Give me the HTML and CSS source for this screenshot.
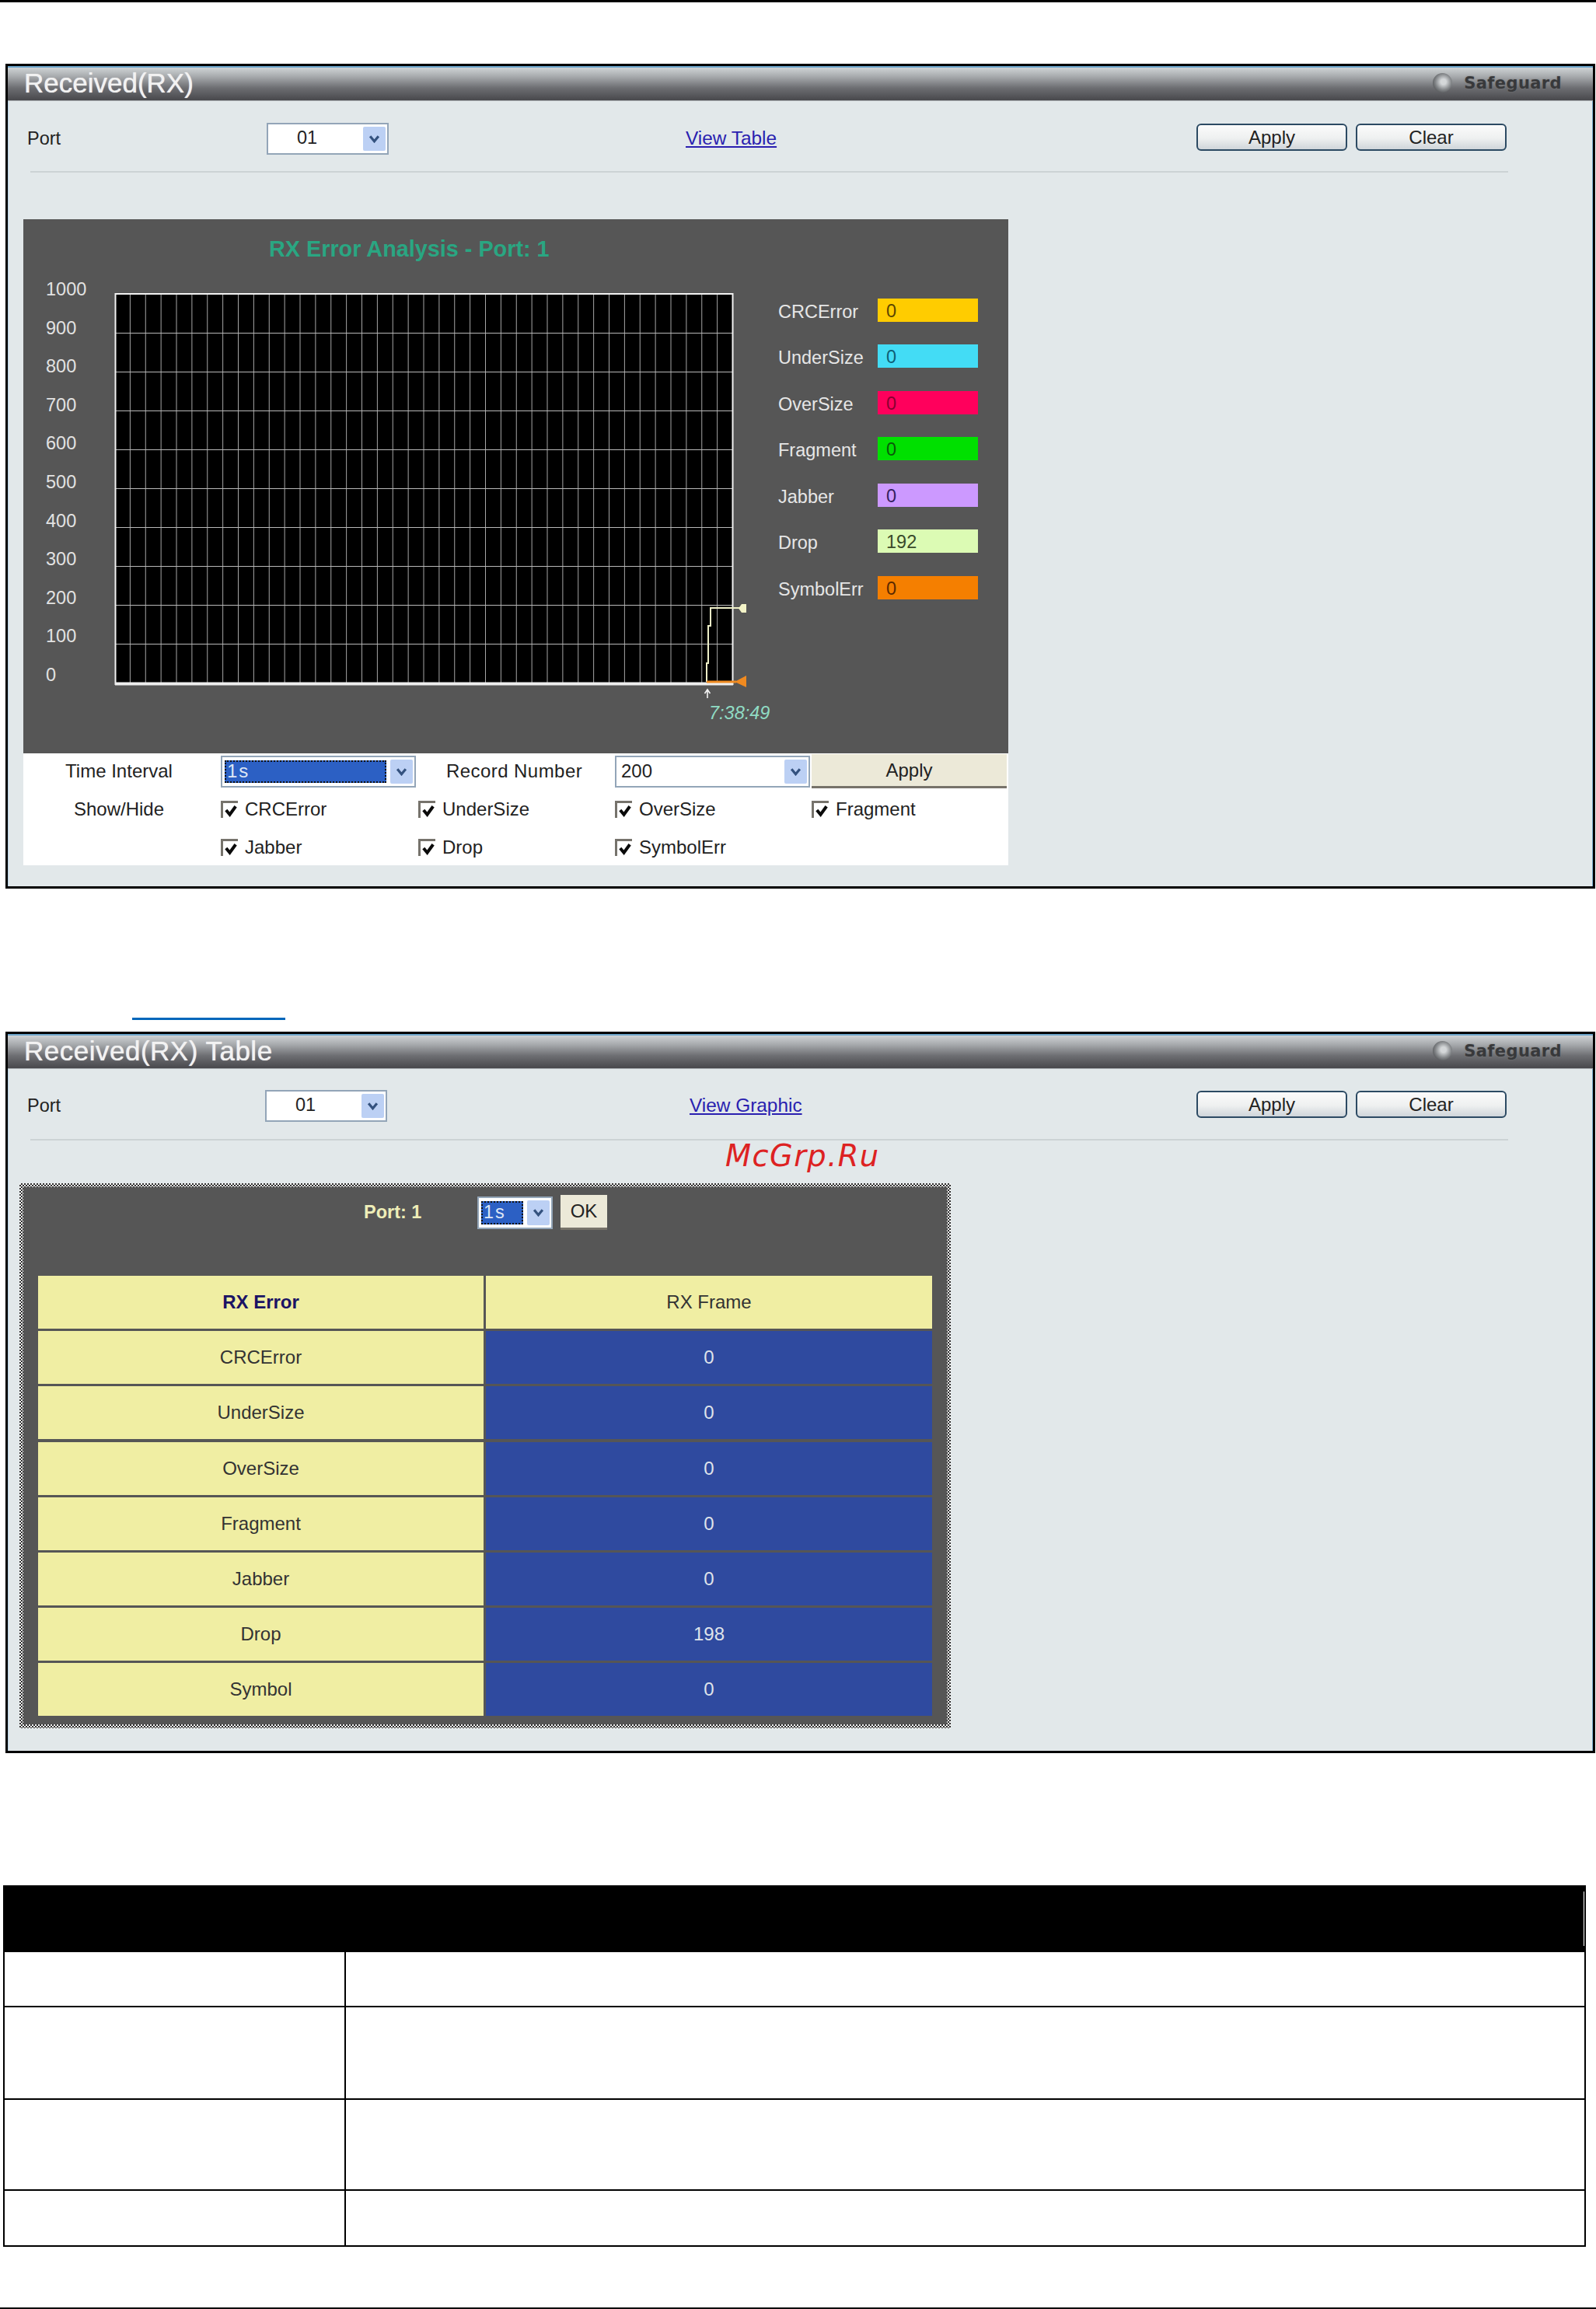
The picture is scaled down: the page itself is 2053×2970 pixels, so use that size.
FILE: index.html
```html
<!DOCTYPE html>
<html lang="en">
<head>
<meta charset="utf-8">
<title>Received(RX)</title>
<link rel="stylesheet" href="styles.css">
</head>
<body>
<div class="page">
  <div class="rule-top"></div>

  <section class="panel panel-graph">
    <header class="titlebar">
      <h2 class="title">Received(RX)</h2>
      <div class="safeguard"><span class="sg-dot"></span><span class="sg-text">Safeguard</span></div>
    </header>
    <div class="toolbar toolbar-graph">
      <span class="tb-label">Port</span>
      <div class="sel sel-port"><span class="sel-val sel-val-port">01</span><span class="sel-btn"><svg class="chev" viewBox="0 0 14 10"><path d="M2 2l5 6 5-6"/></svg></span></div>
      <a class="link" href="#">View Table</a>
      <button class="btn">Apply</button>
      <button class="btn">Clear</button>
    </div>
    <div class="divider"></div>

    <div class="analysis">
      <div class="chart">
        <div class="chart-title">RX Error Analysis - Port: 1</div>
        <div class="chart-body">
          <div class="yaxis">
            <span>1000</span><span>900</span><span>800</span><span>700</span><span>600</span><span>500</span><span>400</span><span>300</span><span>200</span><span>100</span><span>0</span>
          </div>
          <svg class="plot" width="848" height="555" viewBox="0 0 848 555">
            <defs>
              <pattern id="cells" x="1" y="3" width="19.875" height="50" patternUnits="userSpaceOnUse">
                <path d="M19.875 0V50M0 0H19.875" class="gridline"/>
              </pattern>
            </defs>
            <rect x="1" y="2" width="795" height="504" fill="#000"/>
            <rect x="1" y="2" width="795" height="504" fill="url(#cells)"/>
            <path d="M1.5 3H795.5V505H1.5Z" class="plot-frame"/>
            <path d="M1 504.5H796" class="plot-base"/>
            <path d="M762 502V478H764V430H767V407H805" class="trace-drop"/>
            <path d="M803 407.5L807 402H813V413H807Z" class="mark-drop"/>
            <path d="M762 502H800" class="trace-sym"/>
            <path d="M798 502L813 494V509Z" class="mark-sym"/>
            <path d="M763 523V513M759.5 517L763 512L766.5 517" class="tick-up"/>
            <text x="765" y="550" class="time">7:38:49</text>
          </svg>
          <div class="legend">
            <div class="leg-row"><span class="leg-name">CRCError</span><span class="leg-val c-crc">0</span></div>
            <div class="leg-row"><span class="leg-name">UnderSize</span><span class="leg-val c-under">0</span></div>
            <div class="leg-row"><span class="leg-name">OverSize</span><span class="leg-val c-over">0</span></div>
            <div class="leg-row"><span class="leg-name">Fragment</span><span class="leg-val c-frag">0</span></div>
            <div class="leg-row"><span class="leg-name">Jabber</span><span class="leg-val c-jab">0</span></div>
            <div class="leg-row"><span class="leg-name">Drop</span><span class="leg-val c-drop">192</span></div>
            <div class="leg-row"><span class="leg-name">SymbolErr</span><span class="leg-val c-sym">0</span></div>
          </div>
        </div>
      </div>

      <form class="options">
        <span class="opt-label">Time Interval</span>
        <div class="sel sel-wide"><span class="sel-val sel-val-focus">1s</span><span class="sel-btn"><svg class="chev" viewBox="0 0 14 10"><path d="M2 2l5 6 5-6"/></svg></span></div>
        <span class="opt-label opt-label-mid">Record Number</span>
        <div class="sel sel-wide"><span class="sel-val sel-val-plain">200</span><span class="sel-btn"><svg class="chev" viewBox="0 0 14 10"><path d="M2 2l5 6 5-6"/></svg></span></div>
        <button class="btn-flat btn-flat-wide">Apply</button>

        <span class="opt-label">Show/Hide</span>
        <label class="chk"><span class="box"><svg viewBox="0 0 20 19"><path d="M4 9l5 6 8-11"/></svg></span>CRCError</label>
        <label class="chk"><span class="box"><svg viewBox="0 0 20 19"><path d="M4 9l5 6 8-11"/></svg></span>UnderSize</label>
        <label class="chk"><span class="box"><svg viewBox="0 0 20 19"><path d="M4 9l5 6 8-11"/></svg></span>OverSize</label>
        <label class="chk"><span class="box"><svg viewBox="0 0 20 19"><path d="M4 9l5 6 8-11"/></svg></span>Fragment</label>

        <span class="opt-blank"></span>
        <label class="chk"><span class="box"><svg viewBox="0 0 20 19"><path d="M4 9l5 6 8-11"/></svg></span>Jabber</label>
        <label class="chk"><span class="box"><svg viewBox="0 0 20 19"><path d="M4 9l5 6 8-11"/></svg></span>Drop</label>
        <label class="chk"><span class="box"><svg viewBox="0 0 20 19"><path d="M4 9l5 6 8-11"/></svg></span>SymbolErr</label>
      </form>
    </div>
  </section>

  <div class="ref-underline"></div>

  <section class="panel panel-table">
    <header class="titlebar">
      <h2 class="title title-table">Received(RX) Table</h2>
      <div class="safeguard"><span class="sg-dot"></span><span class="sg-text">Safeguard</span></div>
    </header>
    <div class="toolbar toolbar-table">
      <span class="tb-label">Port</span>
      <div class="sel sel-port"><span class="sel-val sel-val-port">01</span><span class="sel-btn"><svg class="chev" viewBox="0 0 14 10"><path d="M2 2l5 6 5-6"/></svg></span></div>
      <a class="link" href="#">View Graphic</a>
      <button class="btn">Apply</button>
      <button class="btn">Clear</button>
    </div>
    <div class="divider"></div>
    <div class="watermark">McGrp.Ru</div>

    <div class="dither">
      <div class="dither-inner">
        <div class="port-row">
          <span class="port-name">Port: 1</span>
          <div class="sel sel-mini"><span class="sel-val sel-val-focus">1s</span><span class="sel-btn"><svg class="chev" viewBox="0 0 14 10"><path d="M2 2l5 6 5-6"/></svg></span></div>
          <button class="btn-flat btn-flat-ok">OK</button>
        </div>
        <div class="rx-grid">
          <div class="rx-key rx-head">RX Error</div><div class="rx-key">RX Frame</div>
          <div class="rx-key">CRCError</div><div class="rx-val">0</div>
          <div class="rx-key">UnderSize</div><div class="rx-val">0</div>
          <div class="rx-key">OverSize</div><div class="rx-val">0</div>
          <div class="rx-key">Fragment</div><div class="rx-val">0</div>
          <div class="rx-key">Jabber</div><div class="rx-val">0</div>
          <div class="rx-key">Drop</div><div class="rx-val">198</div>
          <div class="rx-key">Symbol</div><div class="rx-val">0</div>
        </div>
      </div>
    </div>
  </section>

  <div class="spec">
    <div class="spec-head"><span class="spec-tick"></span></div>
    <div class="spec-row spec-r1"><div class="spec-a"></div><div></div></div>
    <div class="spec-row spec-r2"><div class="spec-a"></div><div></div></div>
    <div class="spec-row spec-r3"><div class="spec-a"></div><div></div></div>
    <div class="spec-row spec-r4"><div class="spec-a"></div><div></div></div>
  </div>

  <div class="rule-bottom"></div>
</div>
</body>
</html>
```
FILE: styles.css
```css
* { box-sizing: border-box; }
html, body { margin: 0; padding: 0; background: #fff; }
body { font-family: "Liberation Sans", Arial, sans-serif; font-size: 23.5px; color: #222; }

.page { width: 2053px; height: 2970px; display: flex; flex-direction: column; overflow: hidden; }
.rule-top { height: 3px; background: #000; flex: none; }
.rule-bottom { height: 2px; background: #000; margin-top: auto; flex: none; }

/* Panels */
.panel {
  position: relative;
  flex: none;
  margin-left: 7px;
  width: 2045px;
  border: 3px solid #000;
  background: #e2e8ea;
  box-shadow: inset 1px 0 #b7d3e6, inset -1px 0 #7fb0d0;
}
.panel-graph { margin-top: 79px; height: 1061px; }
.panel-table { height: 928px; margin-top: 15px; }

.titlebar {
  height: 45px;
  display: flex;
  align-items: center;
  justify-content: space-between;
  padding: 0 40px 3px 21px;
  border-top: 2px solid #6ea6cc;
  border-bottom: 1px solid #a8adb0;
  background: linear-gradient(#cfd3d5 0%, #a6a9ac 28%, #6d6e72 62%, #48484c 100%);
}
.title { margin: 0; font-size: 35px; font-weight: 400; color: #f2f2f2; line-height: 1; text-shadow: 0 0 1px #f2f2f2; }
.title-table { letter-spacing: .5px; }
.safeguard { display: flex; align-items: center; gap: 15px; }
.sg-dot {
  width: 25px; height: 25px; border-radius: 50%;
  background: radial-gradient(circle at 55% 45%, #d4d7d9 0 18%, #85888b 52%, #2a2b2d 100%);
}
.sg-text { font-family: "DejaVu Sans", sans-serif; font-weight: 700; font-size: 21px; color: #38393b; letter-spacing: .4px; text-shadow: 0 0 2px #77787a; }

/* Toolbar */
.toolbar { height: 90px; padding: 6px 0 0 25px; display: grid; align-items: center; }
.toolbar-graph { grid-template-columns: 308px 539px 657px 205px 193px; }
.toolbar-table { grid-template-columns: 306px 546px 652px 205px 193px; padding-top: 4px; }
.link { color: #2a1fb0; text-decoration: underline; justify-self: start; font-size: 24.4px; }
.btn {
  width: 194px; height: 35px; margin-bottom: 3px;
  border: 2px solid #2c4a63; border-radius: 6px;
  background: linear-gradient(#fbfbfb, #eef0f0 55%, #cfd5da);
  font: 24px "Liberation Sans", Arial, sans-serif; color: #222; padding: 0;
}
.divider { height: 2px; margin: 0 109px 0 29px; background: #ccd3d5; }

/* Select look-alike */
.sel {
  display: flex; align-items: stretch; justify-content: space-between;
  height: 41px; padding: 2px;
  background: #fff; border: 2px solid #93a5b8;
}
.sel-port { width: 157px; }
.sel-wide { width: 251px; }
.sel-mini { width: 97px; height: 42px; }
.sel-val { flex: 1; display: flex; align-items: center; line-height: 1; }
.sel-val-port { padding-left: 35px; }
.sel-val-plain { padding-left: 4px; }
.sel-val-focus { background: #2c60c4; color: #dfe7f5; outline: 2px dotted #111; outline-offset: -2px; padding-left: 3px; margin: 2px 5px 2px 1px; letter-spacing: 2px; }
.sel-btn { width: 29px; background: #bcd0f4; display: flex; align-items: center; justify-content: center; flex: none; border-radius: 2px; margin: 1px 0 1px 0; }
.chev { width: 15px; height: 11px; }
.chev path { fill: none; stroke: #34527f; stroke-width: 3; }

/* Analysis card */
.analysis { width: 1267px; margin: 60px 0 0 20px; }
.chart { height: 687px; background: #565656; overflow: hidden; }
.chart-title { height: 65px; padding: 21px 0 0 316px; font-size: 28.8px; line-height: 34px; font-weight: 700; color: #2aa682; }
.chart-body { display: flex; padding-left: 29px; }
.yaxis { width: 88px; flex: none; display: flex; flex-direction: column; padding-top: 1px; color: #e2e2e2; }
.yaxis span { height: 49.6px; line-height: 49.6px; }
.plot { margin-top: 28px; flex: none; display: block; }
.gridline { fill: none; stroke: #b8b8b8; stroke-width: 1.8; }
.plot-frame { fill: none; stroke: #f2f2f2; stroke-width: 2; }
.plot-base { fill: none; stroke: #eee; stroke-width: 4; }
.trace-drop { fill: none; stroke: #eef0c8; stroke-width: 2; }
.mark-drop { fill: #f4f4c8; }
.trace-sym { fill: none; stroke: #ee8a22; stroke-width: 3; }
.mark-sym { fill: #f08a20; }
.tick-up { fill: none; stroke: #f2f2f2; stroke-width: 1.6; }
.time { font: italic 23.5px "Liberation Sans", Arial, sans-serif; fill: #90dcc4; }

.legend { margin: 22px 0 0 6px; color: #e6e6e6; }
.leg-row { height: 59.5px; display: flex; align-items: center; }
.leg-name { width: 128px; padding-top: 5px; }
.leg-val { width: 129px; height: 30px; padding: 1px 0 0 11px; line-height: 30px; }
.c-crc { background: #ffcc00; color: #5c4600; }
.c-under { background: #43dcf5; color: #0e5f75; }
.c-over { background: #ff005c; color: #8a0030; }
.c-frag { background: #00e000; color: #0a5a0a; }
.c-jab { background: #cc99ff; color: #34205e; }
.c-drop { background: #dcfbb4; color: #3a4a2a; }
.c-sym { background: #f57f00; color: #5c2a00; }

/* Options strip */
.options {
  height: 144px; background: #fff;
  display: grid;
  grid-template-columns: 254px 254px 253px 253px 253px;
  grid-template-rows: 46px 52px 46px;
  align-items: center;
  font-size: 24px;
}
.opt-label { text-align: center; padding-right: 8px; }
.opt-label-mid { padding-right: 6px; letter-spacing: .45px; white-space: nowrap; }
.btn-flat {
  font: 24px "Liberation Sans", Arial, sans-serif; color: #222; padding: 0;
  background: #ece9d8; border: 0; border-bottom: 3px solid #77736a;
}
.btn-flat-wide { width: 251px; height: 44px; }
.chk { display: flex; align-items: center; gap: 9px; }
.box {
  width: 22px; height: 22px; flex: none;
  border: solid #76736c; border-width: 3px 0 0 3px;
  background: #fff; display: block;
}
.box svg { display: block; width: 19px; height: 19px; }
.box path { fill: none; stroke: #0a0a0a; stroke-width: 4.2; }

/* Reference underline */
.ref-underline { flex: none; width: 197px; height: 3px; margin: 166px 0 0 170px; background: #0066bb; }

.watermark {
  position: absolute; left: 923px; top: 133px;
  font: italic 38.4px "DejaVu Sans", sans-serif; line-height: 48px;
  letter-spacing: 1.4px; color: #dd2222;
}

/* Dotted table box */
.dither {
  width: 1198px; height: 701px; margin: 55px 0 0 15px; padding: 5px;
  background: repeating-conic-gradient(#2d2d2d 0 25%, #f4f4f4 0 50%) 0 0 / 4px 4px;
}
.dither-inner { height: 100%; background: #565656; padding: 10px 19px 0; }
.port-row { height: 45px; margin-bottom: 59px; padding-left: 419px; display: flex; align-items: center; }
.port-name { width: 73px; color: #eeeeb8; font-weight: 700; white-space: nowrap; }
.sel-mini { margin-left: 73px; }
.btn-flat-ok { width: 60px; height: 45px; margin-left: 10px; }
.rx-grid { display: grid; grid-template-columns: 573px 574px; grid-auto-rows: 68px; gap: 3.2px 3px; font-size: 24px; }
.rx-key, .rx-val { display: flex; align-items: center; justify-content: center; }
.rx-key { background: #f0eea3; color: #333; }
.rx-head { font-weight: 700; color: #1b1464; }
.rx-val { background: #2f4a9f; color: #dfe3ea; }

/* Parameter table */
.spec { flex: none; width: 2036px; margin: 170px 0 0 4px; border: solid #000; border-width: 0 2px 2px 2px; }
.spec-head { height: 86px; margin: 0 -2px; background: #000; padding: 8px 2px 8px 0; display: flex; justify-content: flex-end; }
.spec-tick { width: 1px; background: #fff; }
.spec-row { display: grid; grid-template-columns: 439px 1fr; border-bottom: 2px solid #000; }
.spec-row:last-child { border-bottom: 0; }
.spec-a { border-right: 2px solid #000; }
.spec-r1 { height: 71px; }
.spec-r2 { height: 119px; }
.spec-r3 { height: 117px; }
.spec-r4 { height: 70px; }
```
